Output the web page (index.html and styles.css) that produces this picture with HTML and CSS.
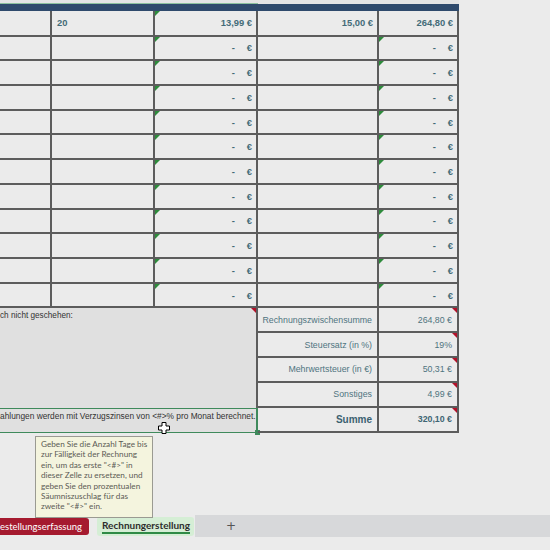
FILE: index.html
```html
<!DOCTYPE html>
<html lang="de">
<head>
<meta charset="utf-8">
<link rel="stylesheet" href="styles.css">
</head>
<body>
<div class="area">
  <div class="sheet">
    <div class="colhead"><div class="sel"></div></div>
    <div class="band"></div>
    <div class="grid">
      <div class="c"></div><div class="c l">20</div><div class="c tg">13,99 €</div><div class="c">15,00 €</div><div class="c">264,80 €</div>
      <div class="c"></div><div class="c"></div><div class="c tg"><span class="d">-</span>€</div><div class="c"></div><div class="c tg"><span class="d">-</span>€</div>
      <div class="c"></div><div class="c"></div><div class="c tg"><span class="d">-</span>€</div><div class="c"></div><div class="c tg"><span class="d">-</span>€</div>
      <div class="c"></div><div class="c"></div><div class="c tg"><span class="d">-</span>€</div><div class="c"></div><div class="c tg"><span class="d">-</span>€</div>
      <div class="c"></div><div class="c"></div><div class="c tg"><span class="d">-</span>€</div><div class="c"></div><div class="c tg"><span class="d">-</span>€</div>
      <div class="c"></div><div class="c"></div><div class="c tg"><span class="d">-</span>€</div><div class="c"></div><div class="c tg"><span class="d">-</span>€</div>
      <div class="c"></div><div class="c"></div><div class="c tg"><span class="d">-</span>€</div><div class="c"></div><div class="c tg"><span class="d">-</span>€</div>
      <div class="c"></div><div class="c"></div><div class="c tg"><span class="d">-</span>€</div><div class="c"></div><div class="c tg"><span class="d">-</span>€</div>
      <div class="c"></div><div class="c"></div><div class="c tg"><span class="d">-</span>€</div><div class="c"></div><div class="c tg"><span class="d">-</span>€</div>
      <div class="c"></div><div class="c"></div><div class="c tg"><span class="d">-</span>€</div><div class="c"></div><div class="c tg"><span class="d">-</span>€</div>
      <div class="c"></div><div class="c"></div><div class="c tg"><span class="d">-</span>€</div><div class="c"></div><div class="c tg"><span class="d">-</span>€</div>
      <div class="c"></div><div class="c"></div><div class="c tg"><span class="d">-</span>€</div><div class="c"></div><div class="c tg"><span class="d">-</span>€</div>
    </div>
    <div class="bottom">
      <div class="note tr">ch nicht geschehen:</div>
      <div class="lbl">Rechnungszwischensumme</div><div class="val tr">264,80 €</div>
      <div class="lbl">Steuersatz (in %)</div><div class="val tr">19%</div>
      <div class="lbl">Mehrwertsteuer (in €)</div><div class="val tr">50,31 €</div>
      <div class="lbl">Sonstiges</div><div class="val tr">4,99 €</div>
      <div class="note2">ahlungen werden mit Verzugszinsen von &lt;#&gt;% pro Monat berechnet.<span class="handle"></span>
        <svg class="cursor" width="12" height="12" viewBox="0 0 12 12"><path d="M4 0.5H8V4H11.5V8H8V11.5H4V8H0.5V4H4Z" fill="#fff" stroke="#000" stroke-width="1"/></svg>
      </div>
      <div class="lbl sum">Summe</div><div class="val tr b">320,10 €</div>
    </div>
  </div>
  <div class="tip">Geben Sie die Anzahl Tage bis<br>zur Fälligkeit der Rechnung<br>ein, um das erste "&lt;#&gt;" in<br>dieser Zelle zu ersetzen, und<br>geben Sie den prozentualen<br>Säumniszuschlag für das<br>zweite "&lt;#&gt;" ein.</div>
</div>
<div class="tabs">
  <div class="tab-red">estellungserfassung</div>
  <div class="tab-green"><span>Rechnungerstellung</span></div>
  <div class="rest"><span class="plus">+</span></div>
</div>
</body>
</html>
```
FILE: styles.css
```css
html, body {
  margin: 0;
  padding: 0;
}
body {
  width: 550px;
  height: 550px;
  overflow: hidden;
  background: #ebebeb;
  font-family: "Liberation Sans", Arial, sans-serif;
}
.area {
  position: relative;
  height: 515px;
}
.sheet {
  width: 459px;
}
.colhead {
  height: 4px;
  background: #e4e4e4;
}
.colhead .sel {
  width: 258px;
  height: 4px;
  box-sizing: border-box;
  border-bottom: 1px solid #8cc19e;
}
.band {
  height: 7px;
  background: #2f4a6c;
}
.grid {
  display: grid;
  grid-template-columns: 52px 103px 103px 121px 80px;
  grid-template-rows: 25.5px;
  grid-auto-rows: 24.73px;
}
.c {
  position: relative;
  box-sizing: border-box;
  border-right: 2px solid #5c5c5c;
  border-bottom: 2px solid #5c5c5c;
  display: flex;
  align-items: center;
  justify-content: flex-end;
  padding: 0 4px 0 5px;
  font-size: 9.4px;
  font-weight: bold;
  color: #436b78;
  white-space: nowrap;
}
.c.l {
  justify-content: flex-start;
}
.c .d {
  margin-right: 12px;
}
.tg::before {
  content: "";
  position: absolute;
  left: 0;
  top: 0;
  border-top: 5px solid #2e8b3c;
  border-right: 5px solid transparent;
}
.tr::after {
  content: "";
  position: absolute;
  right: 0;
  top: 0;
  border-top: 5px solid #b3122a;
  border-left: 5px solid transparent;
}
.bottom {
  display: grid;
  grid-template-columns: 258px 121px 80px;
  grid-auto-rows: 24.84px;
}
.note {
  grid-column: 1;
  grid-row: 1 / 5;
  position: relative;
  background: #e0e0e0;
  border-right: 2px solid #5c5c5c;
  box-sizing: border-box;
  font-size: 8.2px;
  color: #333;
  padding: 3px 0 0 0;
  white-space: nowrap;
}
.note2 {
  grid-column: 1;
  grid-row: 5;
  position: relative;
  background: #e0e0e0;
  border-top: 1px solid #3f8a5c;
  border-right: 2px solid #3f8a5c;
  border-bottom: 1px solid #3f8a5c;
  box-sizing: border-box;
  font-size: 8.35px;
  color: #333;
  padding: 2px 0 0 0;
  white-space: nowrap;
}
.handle {
  position: absolute;
  right: -4px;
  bottom: -3px;
  width: 5px;
  height: 5px;
  background: #3f8a5c;
}
.cursor {
  position: absolute;
  left: 158px;
  top: 13px;
}
.lbl, .val {
  position: relative;
  box-sizing: border-box;
  border-right: 2px solid #5c5c5c;
  border-bottom: 2px solid #5c5c5c;
  display: flex;
  align-items: center;
  justify-content: flex-end;
  padding-right: 5px;
  font-size: 8.8px;
  color: #4f747f;
  white-space: nowrap;
}
.lbl.sum {
  font-size: 10px;
  font-weight: bold;
  color: #3b6170;
}
.val.b {
  font-weight: bold;
  color: #3f6574;
}
.tip {
  position: absolute;
  left: 35px;
  top: 436px;
  width: 118px;
  height: 82px;
  box-sizing: border-box;
  background: #f4f4de;
  border: 1px solid #9a9a92;
  padding: 2px 0 0 5px;
  font-family: Lato, "Open Sans", sans-serif;
  font-size: 8.2px;
  line-height: 10.4px;
  color: #5b5b55;
  white-space: nowrap;
  overflow: hidden;
}
.tabs {
  display: flex;
  height: 22px;
  background: #ebebeb;
}
.tab-red {
  align-self: center;
  width: 89px;
  height: 17px;
  background: #a51a2f;
  border-radius: 0 3px 3px 0;
  color: #fff;
  font-family: Lato, "Open Sans", sans-serif;
  font-size: 9.5px;
  line-height: 17px;
  white-space: nowrap;
  overflow: hidden;
}
.tab-green {
  align-self: center;
  margin-left: 8px;
  width: 97px;
  height: 19px;
  box-sizing: border-box;
  background: #d5eed5;
  border-radius: 3px;
  padding-left: 5px;
  font-family: Lato, "Open Sans", sans-serif;
  font-size: 10px;
  font-weight: bold;
  color: #2d2d2d;
  white-space: nowrap;
}
.tab-green span {
  display: inline-block;
  line-height: 13px;
  margin-top: 2px;
  border-bottom: 2px solid #2f8a46;
}
.rest {
  flex: 1;
  margin-left: 1px;
  background: #d7d8da;
  display: flex;
  align-items: center;
  padding-left: 31px;
}
.plus {
  font-family: "DejaVu Sans", sans-serif;
  font-size: 12px;
  color: #555;
  line-height: 12px;
}
```
